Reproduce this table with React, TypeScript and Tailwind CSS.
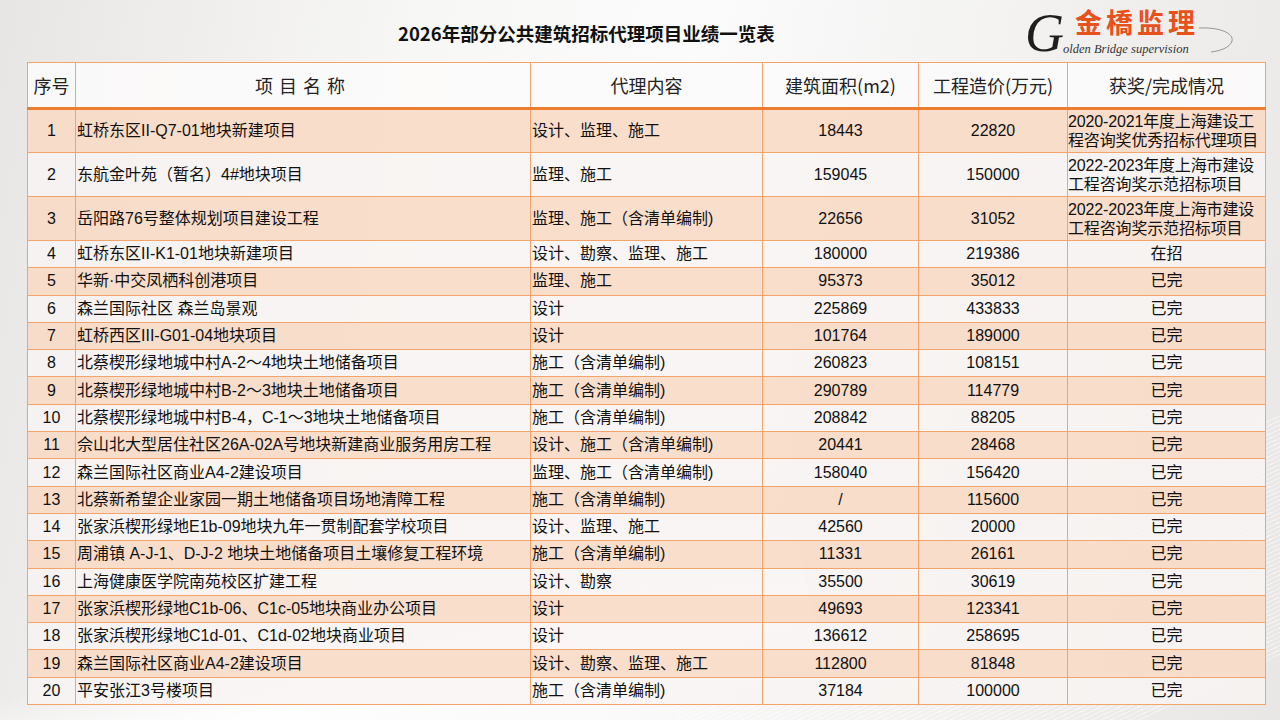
import React from "react";

type Row = {
  no: string;
  name: string;
  scope: string;
  area: string;
  cost: string;
  status: string[];
};

const AWARD1 = ["2020-2021年度上海建设工", "程咨询奖优秀招标代理项目"];
const AWARD2 = ["2022-2023年度上海市建设", "工程咨询奖示范招标项目"];

const rows: Row[] = [
  { no: "1", name: "虹桥东区II-Q7-01地块新建项目", scope: "设计、监理、施工", area: "18443", cost: "22820", status: AWARD1 },
  { no: "2", name: "东航金叶苑（暂名）4#地块项目", scope: "监理、施工", area: "159045", cost: "150000", status: AWARD2 },
  { no: "3", name: "岳阳路76号整体规划项目建设工程", scope: "监理、施工（含清单编制)", area: "22656", cost: "31052", status: AWARD2 },
  { no: "4", name: "虹桥东区II-K1-01地块新建项目", scope: "设计、勘察、监理、施工", area: "180000", cost: "219386", status: ["在招"] },
  { no: "5", name: "华新·中交凤栖科创港项目", scope: "监理、施工", area: "95373", cost: "35012", status: ["已完"] },
  { no: "6", name: "森兰国际社区 森兰岛景观", scope: "设计", area: "225869", cost: "433833", status: ["已完"] },
  { no: "7", name: "虹桥西区III-G01-04地块项目", scope: "设计", area: "101764", cost: "189000", status: ["已完"] },
  { no: "8", name: "北蔡楔形绿地城中村A-2～4地块土地储备项目", scope: "施工（含清单编制)", area: "260823", cost: "108151", status: ["已完"] },
  { no: "9", name: "北蔡楔形绿地城中村B-2～3地块土地储备项目", scope: "施工（含清单编制)", area: "290789", cost: "114779", status: ["已完"] },
  { no: "10", name: "北蔡楔形绿地城中村B-4，C-1～3地块土地储备项目", scope: "施工（含清单编制)", area: "208842", cost: "88205", status: ["已完"] },
  { no: "11", name: "佘山北大型居住社区26A-02A号地块新建商业服务用房工程", scope: "设计、施工（含清单编制)", area: "20441", cost: "28468", status: ["已完"] },
  { no: "12", name: "森兰国际社区商业A4-2建设项目", scope: "监理、施工（含清单编制)", area: "158040", cost: "156420", status: ["已完"] },
  { no: "13", name: "北蔡新希望企业家园一期土地储备项目场地清障工程", scope: "施工（含清单编制)", area: "/", cost: "115600", status: ["已完"] },
  { no: "14", name: "张家浜楔形绿地E1b-09地块九年一贯制配套学校项目", scope: "设计、监理、施工", area: "42560", cost: "20000", status: ["已完"] },
  { no: "15", name: "周浦镇 A-J-1、D-J-2 地块土地储备项目土壤修复工程环境", scope: "施工（含清单编制)", area: "11331", cost: "26161", status: ["已完"] },
  { no: "16", name: "上海健康医学院南苑校区扩建工程", scope: "设计、勘察", area: "35500", cost: "30619", status: ["已完"] },
  { no: "17", name: "张家浜楔形绿地C1b-06、C1c-05地块商业办公项目", scope: "设计", area: "49693", cost: "123341", status: ["已完"] },
  { no: "18", name: "张家浜楔形绿地C1d-01、C1d-02地块商业项目", scope: "设计", area: "136612", cost: "258695", status: ["已完"] },
  { no: "19", name: "森兰国际社区商业A4-2建设项目", scope: "设计、勘察、监理、施工", area: "112800", cost: "81848", status: ["已完"] },
  { no: "20", name: "平安张江3号楼项目", scope: "施工（含清单编制)", area: "37184", cost: "100000", status: ["已完"] },
];

function Logo() {
  return (
    <div className="relative w-[212px] h-[54px] mr-[43px] mt-[4px]">
      <span className="absolute left-0 top-[6px] text-[54px] leading-[46px] italic text-[#1e1e1e] font-['Liberation_Serif',serif]">
        G
      </span>
      <span className="absolute left-[50px] top-[3px] text-[27px] leading-[30px] font-bold tracking-[4px] text-[#e8501c] font-['Noto_Sans_CJK_TC','Noto_Sans_CJK_SC',sans-serif]">
        金橋监理
      </span>
      <span className="absolute left-[38px] top-[38px] text-[12.5px] leading-[14px] italic text-[#333] font-['Liberation_Serif',serif]">
        olden Bridge supervision
      </span>
      <svg className="absolute left-[172px] top-[22px]" width="40" height="30" viewBox="0 0 40 30">
        <path d="M2 2 C22 1 37 7 35 15 C33 22 22 25 14 26" fill="none" stroke="#8a8a8a" strokeWidth="0.9" />
      </svg>
    </div>
  );
}

export default function App() {
  return (
    <div className="relative w-[1280px] h-[720px] overflow-hidden bg-[linear-gradient(100deg,#e8e6e5_0%,#f7f7f6_30%,#fbfbfb_50%,#f2f1f0_75%,#e9e7e6_100%)] font-['Liberation_Sans','Noto_Sans_CJK_SC',sans-serif] text-[#111]">
      <div className="absolute left-[-80px] bottom-[-50px] w-[900px] h-[150px] rotate-[-12deg] bg-[linear-gradient(180deg,rgba(255,255,255,0)_0%,rgba(255,255,255,0.95)_50%,rgba(255,255,255,0)_100%)]" />
      <div className="absolute right-[-100px] bottom-[-40px] w-[700px] h-[220px] rotate-[-25deg] bg-[repeating-linear-gradient(0deg,rgba(255,255,255,0.55)_0px,rgba(255,255,255,0.55)_1px,rgba(0,0,0,0)_1px,rgba(0,0,0,0)_4px)]" />
      <div className="relative">
        <div className="flex items-start h-[62px]">
          <h1 className="pl-[398px] pt-[21px] text-[18.5px] leading-[24px] font-bold font-['Noto_Sans_CJK_SC',sans-serif] text-[#111]">
            2026年部分公共建筑招标代理项目业绩一览表
          </h1>
          <div className="ml-auto">
            <Logo />
          </div>
        </div>
        <table className="ml-[27px] w-[1238px] table-fixed border-collapse">
          <colgroup>
            <col className="w-[48px]" />
            <col className="w-[455px]" />
            <col className="w-[232px]" />
            <col className="w-[156px]" />
            <col className="w-[149px]" />
            <col className="w-[198px]" />
          </colgroup>
          <thead>
            <tr className="h-[46px] bg-[#fcfbfb]/90 text-[18px] font-['Noto_Sans_CJK_SC',sans-serif] text-[#222]">
              <th className="font-normal border border-[#f3a46a] border-b-[3px] border-b-[#ed7d31] px-0">序号</th>
              <th className="font-normal border border-[#f3a46a] border-b-[3px] border-b-[#ed7d31] tracking-[6px]">项目名称</th>
              <th className="font-normal border border-[#f3a46a] border-b-[3px] border-b-[#ed7d31]">代理内容</th>
              <th className="font-normal border border-[#f3a46a] border-b-[3px] border-b-[#ed7d31]">建筑面积(m2)</th>
              <th className="font-normal border border-[#f3a46a] border-b-[3px] border-b-[#ed7d31]">工程造价(万元)</th>
              <th className="font-normal border border-[#f3a46a] border-b-[3px] border-b-[#ed7d31]">获奖/完成情况</th>
            </tr>
          </thead>
          <tbody className="text-[16px]">
            {rows.map((r, i) => (
              <tr
                key={r.no}
                className={
                  (r.status.length > 1 ? "h-[44px] " : "h-[27.3px] ") +
                  (i % 2 === 0 ? "bg-[#f8dac7]/90" : "bg-[#f7f4f2]/80")
                }
              >
                <td className="border border-[#f3a46a] text-center leading-[20px]">{r.no}</td>
                <td className="border border-[#f3a46a] pl-[1px] whitespace-nowrap leading-[20px]">{r.name}</td>
                <td className="border border-[#f3a46a] pl-[1px] whitespace-nowrap leading-[20px]">{r.scope}</td>
                <td className="border border-[#f3a46a] text-center leading-[20px]">{r.area}</td>
                <td className="border border-[#f3a46a] text-center leading-[20px]">{r.cost}</td>
                <td
                  className={
                    "border border-[#f3a46a] whitespace-nowrap overflow-hidden " +
                    (r.status.length > 1
                      ? "text-left pl-0 text-[16px] leading-[19px] tracking-[-0.15px]"
                      : "text-center leading-[20px]")
                  }
                >
                  {r.status.map((s) => (
                    <div key={s}>{s}</div>
                  ))}
                </td>
              </tr>
            ))}
          </tbody>
        </table>
      </div>
    </div>
  );
}
